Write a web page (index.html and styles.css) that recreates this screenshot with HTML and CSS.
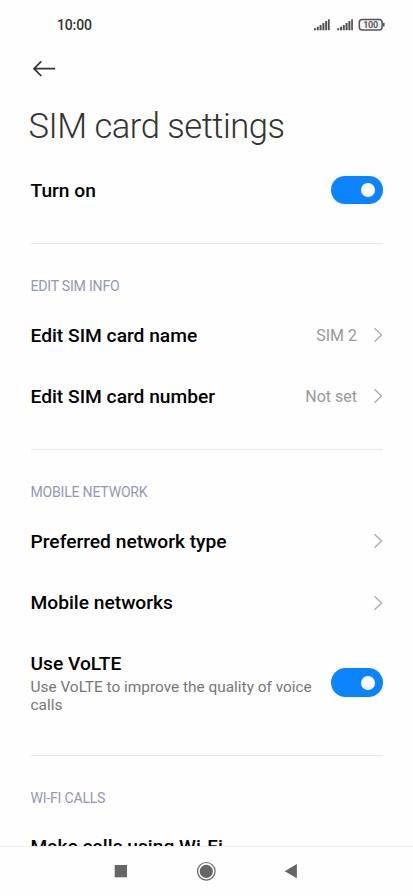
FILE: index.html
```html
<!DOCTYPE html>
<html lang="en">
<head>
<meta charset="utf-8">
<title>SIM card settings</title>
<link rel="stylesheet" href="styles.css">
</head>
<body>
<header class="status">
  <span class="time">10:00</span>
  <svg class="signals" width="72" height="16" viewBox="0 0 72 16">
    <g fill="#505050">
      <path id="bars" d="M1 11.3h2v1.9H1zM3.8 9.7h2v3.5h-2zM6.6 8.1h2v5.1h-2zM9.4 6.1h2v7.1h-2zM12.2 4.1h2v9.1h-2zM15 2.2h1.7v11H15z"/>
      <use href="#bars" x="23.2"/>
    </g>
    <rect x="46.3" y="2.4" width="22.8" height="10.6" rx="3" fill="#f4f4f4" stroke="#555" stroke-width="1.5"/>
    <path d="M69.8 5.8h1.8v3.6h-1.8z" fill="#555"/>
    <text x="57.7" y="10.9" text-anchor="middle" textLength="14.8" class="charge">100</text>
  </svg>
</header>
<nav class="toolbar">
  <svg width="24" height="18" viewBox="0 0 24 18" fill="none" stroke="#333" stroke-width="1.7"><path d="M23.2 8.7H2M9.3 1.4L2 8.7l7.3 7.3"/></svg>
</nav>
<main class="content">
  <h1>SIM card settings</h1>
  <section>
    <div class="row"><span class="name">Turn on</span><span class="toggle"></span></div>
  </section>
  <section>
    <h2>EDIT SIM INFO</h2>
    <div class="row"><span class="name">Edit SIM card name</span><span class="value">SIM 2</span><svg class="chevron" viewBox="0 0 10 16"><path d="M1.5 1.3l7 6.7-7 6.7"/></svg></div>
    <div class="row"><span class="name">Edit SIM card number</span><span class="value">Not set</span><svg class="chevron" viewBox="0 0 10 16"><path d="M1.5 1.3l7 6.7-7 6.7"/></svg></div>
  </section>
  <section>
    <h2>MOBILE NETWORK</h2>
    <div class="row"><span class="name">Preferred network type</span><svg class="chevron" viewBox="0 0 10 16"><path d="M1.5 1.3l7 6.7-7 6.7"/></svg></div>
    <div class="row"><span class="name">Mobile networks</span><svg class="chevron" viewBox="0 0 10 16"><path d="M1.5 1.3l7 6.7-7 6.7"/></svg></div>
    <div class="row tall">
      <div class="detail"><span class="name">Use VoLTE</span><p>Use VoLTE to improve the quality of voice calls</p></div>
      <span class="toggle"></span>
    </div>
  </section>
  <section>
    <h2>WI-FI CALLS</h2>
    <div class="row"><span class="name">Make calls using Wi-Fi</span></div>
  </section>
</main>
<footer class="navbar">
  <svg width="413" height="49" viewBox="0 0 413 49" fill="#666">
    <rect x="114.7" y="18" width="12.3" height="12.3"/>
    <circle cx="206.3" cy="24.3" r="6.6"/>
    <circle cx="206.3" cy="24.3" r="8.8" fill="none" stroke="#666" stroke-width="1.2"/>
    <path d="M284.7 24.3l12.2-7.2v14.2z"/>
  </svg>
</footer>
</body>
</html>
```
FILE: styles.css
```css
* { box-sizing: border-box; }
body {
  margin: 0;
  height: 896px;
  overflow: hidden;
  display: flex;
  flex-direction: column;
  background: #fefefe;
  font-family: Roboto, "Liberation Sans", sans-serif;
  color: #000;
}
.status {
  height: 50px;
  flex: none;
  display: flex;
  align-items: center;
  justify-content: space-between;
  padding: 0 28px 0 57px;
}
.time { font-size: 14px; font-weight: 500; color: #333; letter-spacing: -0.15px; }
.charge { font-size: 9px; font-weight: 600; fill: #505050; }
.toolbar { height: 38px; flex: none; padding: 10px 0 0 32px; }
.toolbar svg { display: block; }
.content { flex: 1; min-height: 0; overflow: hidden; padding: 0 30.5px; }
h1 {
  margin: 0 0 0 -2px;
  height: 71.5px;
  padding-top: 18px;
  font-size: 34.5px;
  line-height: 40px;
  font-weight: 300;
  letter-spacing: -0.47px;
  color: #333;
  white-space: nowrap;
}
section { padding-bottom: 22px; }
section + section { border-top: 1px solid #e8e8e8; }
h2 {
  margin: 0;
  height: 60.5px;
  padding-top: 32px;
  font-size: 14.1px;
  line-height: 20px;
  font-weight: 400;
  letter-spacing: -0.23px;
  color: #9598b4;
}
.row { height: 61.4px; display: flex; align-items: center; }
.name { flex: 1; padding-top: 1px; font-size: 19.2px; line-height: 24px; font-weight: 500; white-space: nowrap; }
.value { padding-top: 1px; font-size: 16px; color: #999; margin-right: 15.5px; }
.chevron { width: 10px; height: 16px; fill: none; stroke: #aaa; stroke-width: 1.3; }
.toggle {
  width: 51.5px;
  height: 28.5px;
  flex: none;
  border-radius: 15px;
  background: #0d84ff;
  display: flex;
  align-items: center;
  justify-content: flex-end;
  padding-right: 7.5px;
}
.toggle::after { content: ""; width: 14px; height: 14px; border-radius: 50%; background: #fff; }
.tall { height: 99.7px; }
.tall .toggle { margin-bottom: 1.5px; }
.detail { flex: 1; }
.detail .name { display: block; padding-top: 0; }
.detail p { margin: 2px 0 0; width: 290px; font-size: 15.4px; line-height: 18px; color: #777; }
section:last-child .name { padding: 0 0 1px; }
.navbar { height: 50px; flex: none; border-top: 1px solid #eee; }
.navbar svg { display: block; }
```
